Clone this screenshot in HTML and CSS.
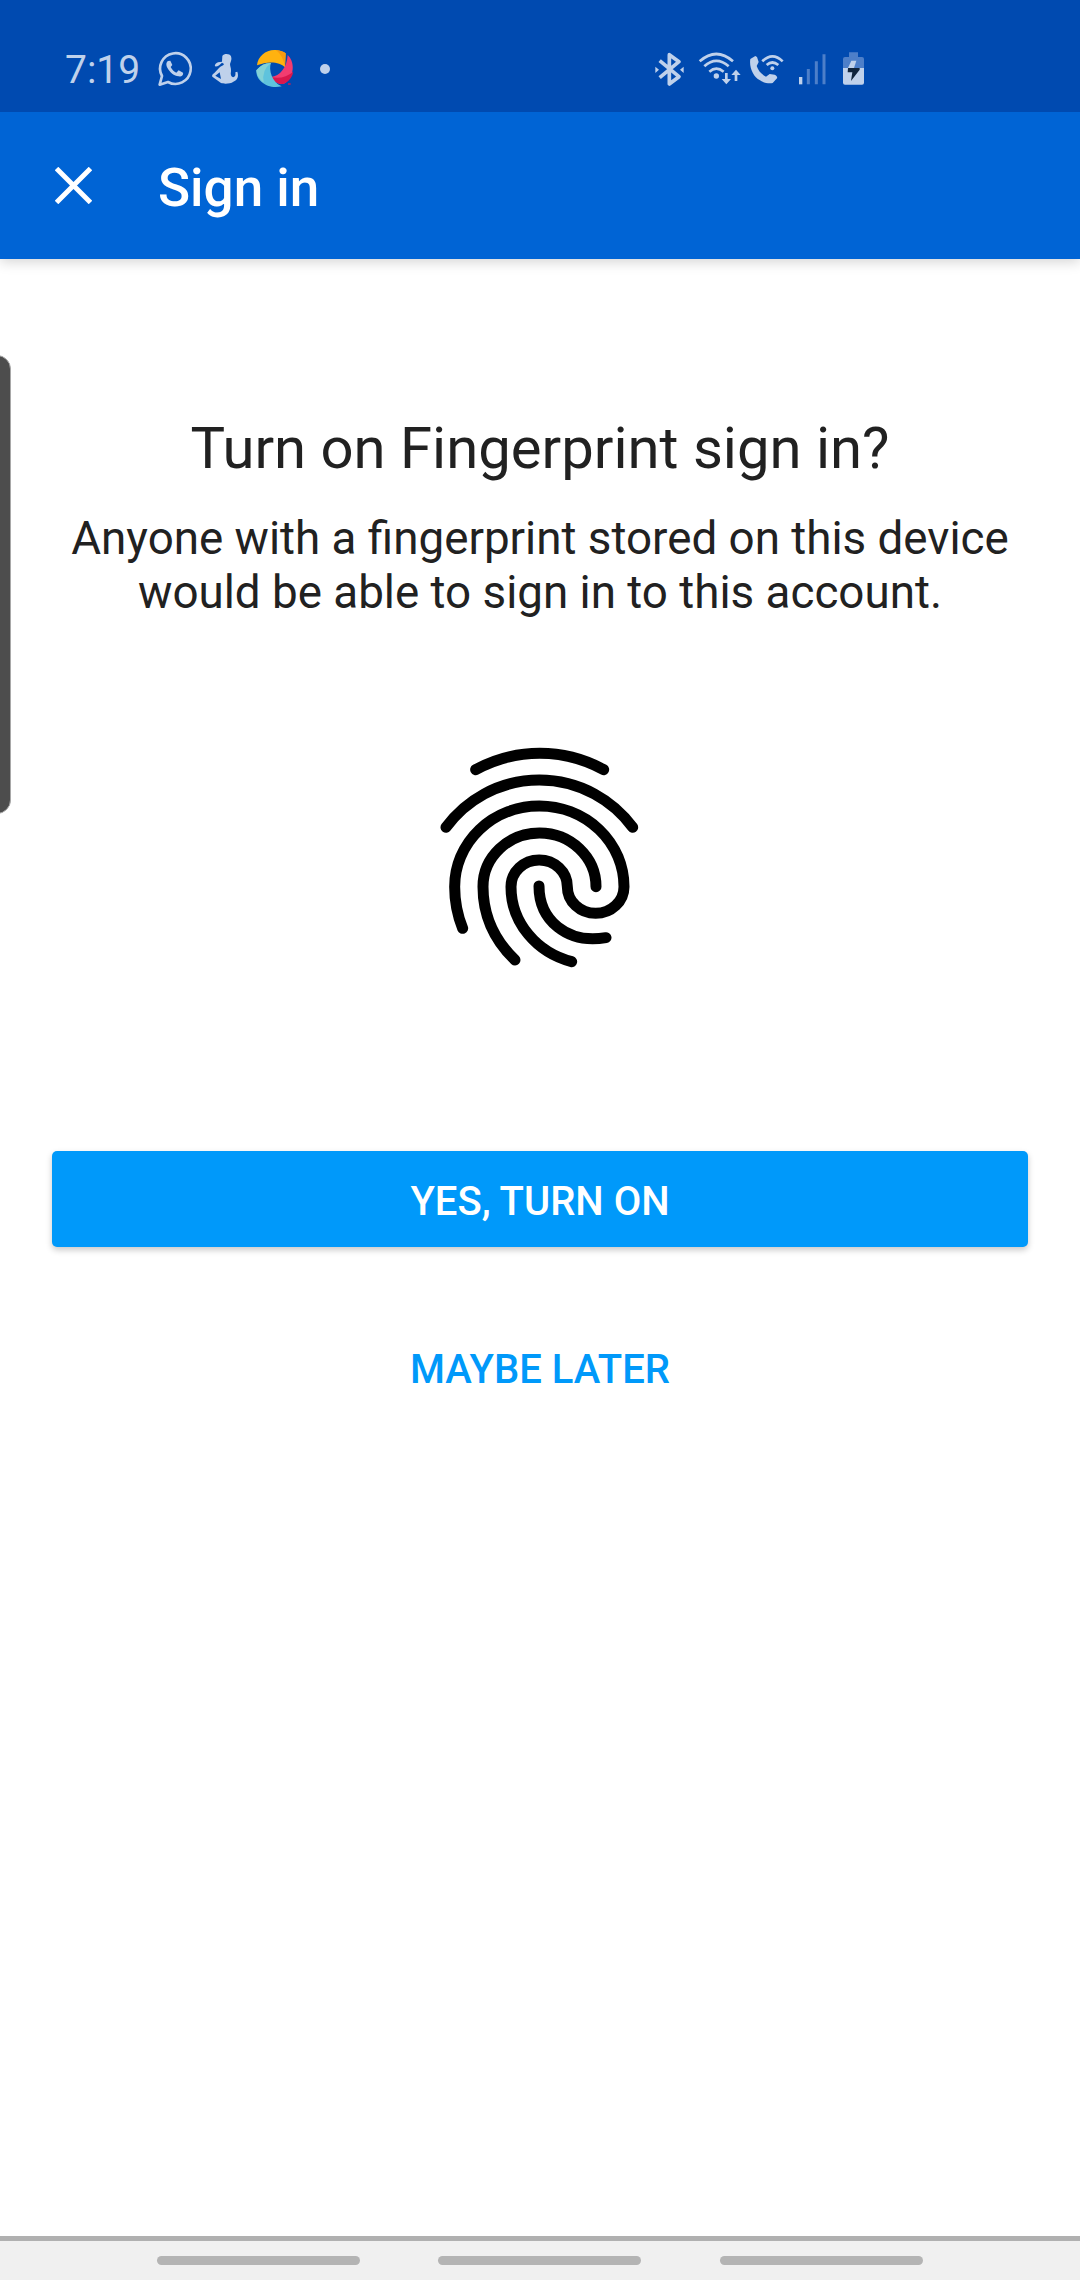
FILE: index.html
```html
<!DOCTYPE html>
<html lang="en">
<head>
<meta charset="utf-8">
<title>Sign in</title>
<link rel="stylesheet" href="styles.css">
</head>
<body>
<div class="screen">
  <div class="status-bar">
    <div class="status-group">
      <span class="clock">7:19</span>
      <svg class="icon icon-whatsapp" viewBox="18 30 114 114">
        <path d="M29 134L36 108A46 46 0 1 1 54 126Z" fill="none" stroke="currentColor" stroke-width="8" stroke-linejoin="round"/>
        <path d="M54 63C48 66 48 76 52 83C60 98 72 107 86 109C94 110 101 106 99 98L86 91L79 98C72 95 66 89 62 81L67 75L61 62Z" fill="currentColor"/>
      </svg>
      <svg class="icon icon-parent" viewBox="180 30 96 114">
        <path d="M217 48C222 40 239 40 243 49C246 58 243 64 241 69C238 75 244 82 243 94C241 103 243 111 249 112C257 111 257 103 256 97L262 95C267 110 262 120 250 125C241 132 221 132 213 129L188 111C184 108 187 103 193 99L207 84C214 77 221 77 222 72L216 68C208 76 203 80 195 79C193 75 198 69 204 67L216 65Z" fill="currentColor"/>
        <path d="M196 107L209 97L213 117Z" class="status-cutout"/>
      </svg>
      <svg class="icon icon-swirl" viewBox="315 30 114 114">
        <path d="M321 76C323 48 350 27 378 30C391 31 400 35 407 40L405 82C390 65 353 62 321 76Z" fill="#ffb20f"/>
        <path d="M378 30Q398 32 407 40L405 82Q400 47 378 30Z" fill="#f79a10"/>
        <path d="M413 45C432 62 437 103 407 128C393 138 373 127 363 111C390 108 411 83 413 45Z" fill="#f23c70"/>
        <path d="M430 95Q426 117 407 128C393 138 373 127 363 111Q401 119 430 95Z" fill="#d9184d"/>
        <path d="M319 91Q338 68 363 69C355 88 366 128 395 139C354 149 317 123 319 91Z" fill="#5fc3dd"/>
        <path d="M319 91Q338 68 363 69Q334 90 341 128Q321 113 319 91Z" fill="#83d1d6"/>
        <path d="M414 132h8" stroke="#d9184d" stroke-width="4"/>
      </svg>
      <span class="more-dot"></span>
    </div>
    <div class="status-group status-system">
      <svg class="icon icon-bluetooth" viewBox="39 30 99 114">
        <path d="M59 62L117 110L88 132V44L117 65L59 113" fill="none" stroke="currentColor" stroke-width="11" stroke-linejoin="round"/>
        <path d="M46 80L57 89L46 99ZM131 80L120 89L131 99Z" fill="currentColor"/>
      </svg>
      <svg class="icon icon-wifi" viewBox="171 30 135 114">
        <path d="M179 64Q229 20 279 64M193 79Q229 46 266 79M208 95Q229 77 251 95" fill="none" stroke="currentColor" stroke-width="8"/>
        <circle cx="229" cy="108" r="8" fill="currentColor"/>
        <path d="M255 99H263V117H273L259 133L245 117H255ZM284 123V105H274L288 89L302 105H292V123Z" fill="currentColor"/>
      </svg>
      <svg class="icon icon-call" viewBox="324 30 111 114">
        <path d="M346 48L331 57C327 82 339 110 360 121C375 131 391 131 398 129L411 115C413 110 409 106 404 104L389 102L378 110C364 103 355 92 350 78L356 66L351 51Z" fill="currentColor"/>
        <path d="M367 64Q397 34 428 64M380 75Q397 60 415 75" fill="none" stroke="currentColor" stroke-width="8"/>
        <circle cx="397" cy="85" r="6" fill="currentColor"/>
      </svg>
      <svg class="icon icon-signal" viewBox="471 30 93 114">
        <path d="M482 111V133" stroke="currentColor" stroke-width="10"/>
        <path d="M505 87V133M529 64V133M552 43V133" stroke="#4d7fc9" stroke-width="9"/>
      </svg>
      <svg class="icon icon-battery" viewBox="600 30 81 114">
        <path d="M627 51V37H654V51H666Q672 51 672 57V84H609V57Q609 51 615 51Z" fill="#4d7fc9"/>
        <path d="M609 84H672V128Q672 134 666 134H615Q609 134 609 128Z" fill="currentColor"/>
        <path d="M634 62H649L642 84H624Z" fill="currentColor"/>
        <path d="M624 84H659V89L633 123L637 97H623Z" fill="#10243c"/>
      </svg>
    </div>
  </div>

  <header class="app-bar">
    <svg class="close" viewBox="0 0 36 36"><path d="M1.5 1.5L34.5 34.5M34.5 1.5L1.5 34.5" stroke="currentColor" stroke-width="4.8"/></svg>
    <h1 class="app-title">Sign in</h1>
  </header>

  <main class="content">
    <h2 class="heading">Turn on Fingerprint sign in?</h2>
    <p class="message">Anyone with a fingerprint stored on this device<br>would be able to sign in to this account.</p>
    <svg class="fingerprint" viewBox="0 0 720 750">
      <path d="M167 119A400 400 0 0 1 551 119M78 292A347 347 0 0 1 638 292M128 595C112 555 104 515 104 470A254 242 0 0 1 612 470A85 80 0 0 1 442 470A84.5 80 0 0 0 273 470C273 580 352 668 455 695M285 690C225 632 189 560 189 470A169.5 161 0 0 1 528 470M357 468C357 570 440 643 558 623"/>
    </svg>
    <button class="button button-primary">YES, TURN ON</button>
    <button class="button button-text">MAYBE LATER</button>
  </main>

  <div class="nav-bar">
    <span class="nav-hint"></span>
    <span class="nav-hint"></span>
    <span class="nav-hint"></span>
  </div>
  <div class="edge-handle"></div>
</div>
</body>
</html>
```

FILE: styles.css
```css
* { box-sizing: border-box; }

body {
  margin: 0;
  font-family: Roboto, "Liberation Sans", sans-serif;
}

.screen {
  position: relative;
  display: flex;
  flex-direction: column;
  width: 1080px;
  height: 2280px;
  overflow: hidden;
  background: #fff;
}

.status-bar {
  position: relative;
  z-index: 1;
  display: flex;
  justify-content: space-between;
  height: 112px;
  padding: 50px 213px 0 65px;
  background: #004ab0;
  color: #bfd1eb;
}

.status-group { display: flex; height: 38px; align-items: center; }
.clock { width: 91px; padding-top: 2px; font-size: 39px; line-height: 38px; }
.icon { display: block; height: 38px; overflow: visible; }
.icon-whatsapp { width: 38px; }
.icon-parent { width: 32px; margin-left: 16px; }
.icon-swirl { width: 38px; margin-left: 13px; }
.status-cutout { fill: #004ab0; }
.more-dot { width: 10px; height: 10px; margin-left: 27px; border-radius: 50%; background: currentColor; }
.icon-bluetooth { width: 33px; }
.icon-wifi { width: 45px; margin-left: 11px; }
.icon-call { width: 37px; margin-left: 6px; }
.icon-signal { width: 31px; margin-left: 12px; }
.icon-battery { width: 27px; margin-left: 12px; }

.app-bar {
  display: flex;
  align-items: center;
  gap: 66px;
  height: 147px;
  padding-left: 55px;
  background: #0064d5;
  color: #fff;
  box-shadow: 0 3px 12px rgba(0, 0, 0, .17);
}
.close { width: 37px; height: 37px; }
.app-title { margin: 4px 0 0; font-size: 53px; line-height: 62px; font-weight: 500; }

.content {
  display: flex;
  flex: 1;
  flex-direction: column;
  padding: 155px 52px 0;
  color: #212121;
  text-align: center;
}
.heading { margin: 0; font-size: 58px; line-height: 68px; font-weight: 400; }
.message { margin: 30px 0 0; font-size: 45.75px; line-height: 54px; white-space: nowrap; }
.fingerprint {
  align-self: center;
  width: 240px;
  height: 250px;
  margin-top: 110px;
  fill: none;
  stroke: #000;
  stroke-width: 33;
  stroke-linecap: round;
}
.button {
  height: 96px;
  padding: 6px 0 0;
  border: 0;
  border-radius: 5px;
  font: 500 40px/48px Roboto, "Liberation Sans", sans-serif;
}
.button-primary { margin-top: 171px; background: #0099fa; color: #fff; box-shadow: 0 3px 6px rgba(0, 0, 0, .22); }
.button-text { margin-top: 72px; background: none; color: #0099fa; }

.nav-bar {
  display: flex;
  justify-content: center;
  gap: 78.5px;
  height: 44px;
  padding: 15px 1px 0 0;
  border-top: 5px solid #b0b0b0;
  background: #f0f0f0;
}
.nav-hint { width: 203px; height: 9px; border-radius: 5px; background: #b4b4b4; }

/* Edge panel handle floating over the left side of the page */
.edge-handle {
  position: absolute;
  left: -20px;
  top: 355px;
  width: 31px;
  height: 459px;
  border: 1.5px solid #a8a8a8;
  border-radius: 14px;
  background: #4d4d4d;
}
```
